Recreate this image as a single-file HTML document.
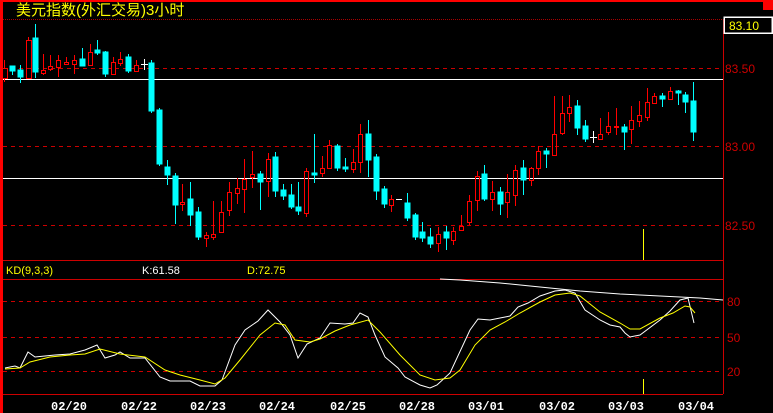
<!DOCTYPE html>
<html><head><meta charset="utf-8"><style>
html,body{margin:0;padding:0;background:#000;width:773px;height:413px;overflow:hidden}
svg{display:block}
text{font-family:"Liberation Sans","Noto Sans CJK SC",sans-serif}
</style></head><body>
<svg width="773" height="413" viewBox="0 0 773 413" xmlns="http://www.w3.org/2000/svg" shape-rendering="crispEdges">
<rect width="773" height="413" fill="#000"/>
<rect x="0" y="0" width="3" height="413" fill="#f00"/>
<rect x="0" y="0" width="773" height="2" fill="#f00"/>
<rect x="763" y="0" width="10" height="10" fill="#f00"/>
<text x="16" y="15" fill="#ff0" font-size="15">美元指数(外汇交易)3小时</text>
<line x1="3" y1="19.5" x2="723" y2="19.5" stroke="#a00" stroke-dasharray="1,1"/>
<line x1="723.5" y1="19" x2="723.5" y2="394" stroke="#c00"/>
<rect x="724" y="17" width="48" height="16" fill="#000" stroke="#fff" stroke-width="1.5"/>
<text x="729" y="30" fill="#ff0" font-size="12">83.10</text>
<g stroke="#c00" stroke-dasharray="4,4">
<line x1="3" y1="68.5" x2="723" y2="68.5"/><line x1="3" y1="146.5" x2="723" y2="146.5"/><line x1="3" y1="225.5" x2="723" y2="225.5"/>
<line x1="3" y1="301.5" x2="723" y2="301.5"/><line x1="3" y1="337.5" x2="723" y2="337.5"/><line x1="3" y1="371.5" x2="723" y2="371.5"/>
</g>
<line x1="3" y1="79.5" x2="723" y2="79.5" stroke="#fff"/>
<line x1="3" y1="178.5" x2="723" y2="178.5" stroke="#fff"/>
<g fill="#c00" font-size="12">
<text x="725" y="73">83.50</text><text x="725" y="151">83.00</text><text x="725" y="230">82.50</text>
<text x="727" y="306">80</text><text x="727" y="342">50</text><text x="727" y="376">20</text>
</g>
<line x1="3" y1="260.5" x2="723" y2="260.5" stroke="#c00"/>
<line x1="3" y1="279.5" x2="723" y2="279.5" stroke="#c00"/>
<line x1="3" y1="394.5" x2="723" y2="394.5" stroke="#c00"/>
<line x1="643.5" y1="229" x2="643.5" y2="260" stroke="#ff0"/>
<line x1="643.5" y1="379" x2="643.5" y2="394" stroke="#ff0"/>
<text x="6" y="274" fill="#ff0" font-size="11">KD(9,3,3)</text>
<text x="142" y="274" fill="#fff" font-size="11">K:61.58</text>
<text x="247" y="274" fill="#ff0" font-size="11">D:72.75</text>
<!-- candles: cyan filled -->
<g stroke="#0ff" fill="#0ff">
<path d="M12.5 66V75M20.5 65V83M35.5 24V78M82.5 48V66M97.5 40V55M105.5 51V77M128.5 54V73M151.5 60V113M159.5 108V166M167.5 160V185M175.5 173V224M190.5 182V226M198.5 207V240M260.5 171V210M275.5 152V197M283.5 184V200M291.5 184V209M298.5 182V215M314.5 134V183M337.5 144V171M345.5 158V172M368.5 120V177M376.5 154V200M384.5 186V208M407.5 193V221M415.5 213V240M422.5 222V242M430.5 228V248M446.5 226V250M484.5 165V201M500.5 187V215M523.5 160V195M546.5 148V168M577.5 100V135M585.5 120V142M624.5 124V150M662.5 93V107M678.5 90V105M685.5 92V113M693.5 82V141"/>
<rect x="10" y="66" width="5" height="5"/><rect x="18" y="70" width="5" height="7"/><rect x="33" y="38" width="5" height="34"/>
<rect x="80" y="59" width="5" height="7"/><rect x="95" y="50" width="5" height="3"/><rect x="103" y="52" width="5" height="22"/>
<rect x="126" y="57" width="5" height="14"/><rect x="149" y="63" width="5" height="48"/><rect x="157" y="110" width="5" height="54"/>
<rect x="165" y="167" width="5" height="8"/><rect x="173" y="176" width="5" height="29"/><rect x="188" y="199" width="5" height="16"/>
<rect x="196" y="212" width="5" height="25"/><rect x="258" y="174" width="5" height="8"/><rect x="273" y="157" width="5" height="34"/>
<rect x="281" y="190" width="5" height="6"/><rect x="289" y="195" width="5" height="12"/><rect x="296" y="207" width="5" height="4"/>
<rect x="312" y="173" width="5" height="2"/><rect x="335" y="146" width="5" height="22"/><rect x="343" y="167" width="5" height="2"/>
<rect x="366" y="134" width="5" height="26"/><rect x="374" y="157" width="5" height="34"/><rect x="382" y="189" width="5" height="15"/>
<rect x="405" y="203" width="5" height="15"/><rect x="413" y="215" width="5" height="22"/><rect x="420" y="232" width="5" height="6"/>
<rect x="428" y="237" width="5" height="7"/><rect x="444" y="232" width="5" height="6"/><rect x="482" y="174" width="5" height="25"/>
<rect x="498" y="192" width="5" height="12"/><rect x="521" y="168" width="5" height="12"/><rect x="544" y="151" width="5" height="3"/>
<rect x="575" y="106" width="5" height="22"/><rect x="583" y="126" width="5" height="13"/><rect x="622" y="127" width="5" height="5"/>
<rect x="660" y="96" width="5" height="3"/><rect x="676" y="91" width="5" height="2"/><rect x="683" y="95" width="5" height="7"/>
<rect x="691" y="101" width="5" height="31"/>
</g>
<!-- red hollow -->
<g stroke="#f00" fill="none">
<path d="M4.5 60V68M4.5 78V82M28.5 37V40M43.5 54V70M43.5 73V75M50.5 55V66M50.5 69V71M58.5 55V60M58.5 67V77M66.5 57V62M74.5 55V60M74.5 64V74M90.5 44V52M113.5 57V62M120.5 52V59M120.5 63V66M136.5 60V65M182.5 184V202M182.5 204V211M206.5 232V235M206.5 238V247M213.5 201V234M213.5 237V240M221.5 201V212M229.5 182V192M229.5 210V216M237.5 178V188M237.5 193V204M244.5 159V179M244.5 189V213M252.5 151V174M252.5 177V188M268.5 153V159M268.5 181V197M306.5 168V171M306.5 213V217M322.5 156V168M322.5 173V177M329.5 140V145M353.5 149V162M353.5 169V173M360.5 124V134M360.5 162V173M391.5 195V199M391.5 205V212M438.5 227V234M438.5 243V252M453.5 227V231M453.5 240V245M461.5 215V226M469.5 195V201M469.5 222V225M477.5 171V176M477.5 200V211M492.5 181V192M492.5 199V211M507.5 174V192M507.5 202V218M515.5 165V170M515.5 195V206M531.5 167V168M531.5 180V186M538.5 146V151M538.5 168V175M554.5 96V134M562.5 96V113M562.5 133V135M569.5 95V107M569.5 113V122M600.5 118V134M608.5 112V126M608.5 132V135M616.5 108V126M616.5 127V135M631.5 106V120M631.5 129V144M639.5 101V115M639.5 121V127M647.5 88V102M647.5 117V121M654.5 93V96M670.5 87V91"/>
<rect x="2.5" y="68.5" width="5" height="10"/><rect x="26.5" y="40.5" width="5" height="38"/><rect x="41.5" y="70.5" width="4" height="3"/>
<rect x="48.5" y="66.5" width="4" height="3"/><rect x="56.5" y="60.5" width="4" height="7"/><rect x="64.5" y="62.5" width="4" height="2"/>
<rect x="72.5" y="60.5" width="4" height="4"/><rect x="88.5" y="52.5" width="4" height="13"/><rect x="111.5" y="62.5" width="4" height="12"/>
<rect x="118.5" y="59.5" width="4" height="4"/><rect x="134.5" y="65.5" width="4" height="6"/><rect x="180.5" y="202.5" width="4" height="2"/>
<rect x="204.5" y="235.5" width="4" height="3"/><rect x="211.5" y="234.5" width="4" height="3"/><rect x="219.5" y="212.5" width="4" height="20"/>
<rect x="227.5" y="192.5" width="4" height="18"/><rect x="235.5" y="188.5" width="4" height="5"/><rect x="242.5" y="179.5" width="4" height="10"/>
<rect x="250.5" y="174.5" width="4" height="3"/><rect x="266.5" y="159.5" width="4" height="22"/><rect x="304.5" y="171.5" width="4" height="42"/>
<rect x="320.5" y="168.5" width="4" height="5"/><rect x="327.5" y="145.5" width="4" height="23"/><rect x="351.5" y="162.5" width="4" height="7"/>
<rect x="358.5" y="134.5" width="4" height="28"/><rect x="389.5" y="199.5" width="4" height="6"/><rect x="436.5" y="234.5" width="4" height="9"/>
<rect x="451.5" y="231.5" width="4" height="9"/><rect x="459.5" y="226.5" width="4" height="4"/><rect x="467.5" y="201.5" width="4" height="21"/>
<rect x="475.5" y="176.5" width="4" height="24"/><rect x="490.5" y="192.5" width="4" height="7"/><rect x="505.5" y="192.5" width="4" height="10"/>
<rect x="513.5" y="170.5" width="4" height="25"/><rect x="529.5" y="168.5" width="4" height="12"/><rect x="536.5" y="151.5" width="4" height="17"/>
<rect x="552.5" y="134.5" width="4" height="21"/><rect x="560.5" y="113.5" width="4" height="20"/><rect x="567.5" y="107.5" width="4" height="6"/>
<rect x="598.5" y="134.5" width="4" height="5"/><rect x="606.5" y="126.5" width="4" height="6"/><rect x="614.5" y="126.5" width="4" height="1"/>
<rect x="629.5" y="120.5" width="4" height="9"/><rect x="637.5" y="115.5" width="4" height="6"/><rect x="645.5" y="102.5" width="4" height="15"/>
<rect x="652.5" y="96.5" width="4" height="7"/><rect x="668.5" y="91.5" width="4" height="8"/>
</g>
<g stroke="#fff"><path d="M141 64.5H148M144.5 59V70M396 199.5H402M590 137.5H597M593.5 131V143"/></g>
<!-- KD lines -->
<g fill="none" shape-rendering="auto" stroke-width="1">
<polyline stroke="#fff" points="5,368 15,366 20,368 28,352 35,357 45,356 55,355 70,354 85,350 97,345 105,358 115,355 120,352 130,358 145,358 160,377 170,381 190,381 200,386 215,386 222,380 235,345 245,330 258,321 268,310 280,322 290,335 298,358 307,344 320,338 330,323 345,324 353,323 360,313 368,317 375,335 385,357 398,368 405,377 420,385 430,388 437,385 450,373 470,330 478,319 490,320 500,318 510,316 518,307 528,303 540,296 555,291 565,290 575,293 585,310 600,320 610,325 620,327 625,333 630,337 640,335 660,320 670,311 680,300 688,298 694,323"/>
<polyline stroke="#ff0" points="5,369 20,368 30,362 50,357 70,355 85,354 100,349 120,354 145,357 165,370 180,375 200,380 215,384 225,378 240,360 260,335 275,323 285,325 295,340 310,342 320,339 335,331 350,325 368,320 380,332 400,355 420,375 435,380 450,378 460,370 475,345 490,330 505,322 520,313 540,302 555,295 570,293 580,296 600,312 620,323 630,329 640,329 660,318 673,313 685,306 690,307 695,313"/>
<polyline stroke="#fff" points="440,279 460,280 500,283 540,287 580,291 620,294 660,296 700,298 723,300"/>
</g>
<g fill="#fff" font-size="12" font-weight="bold" font-family="Liberation Mono,monospace">
<text x="51" y="410" style="font-family:'Liberation Mono',monospace">02/20</text>
<text x="121" y="410" style="font-family:'Liberation Mono',monospace">02/22</text>
<text x="190" y="410" style="font-family:'Liberation Mono',monospace">02/23</text>
<text x="259" y="410" style="font-family:'Liberation Mono',monospace">02/24</text>
<text x="330" y="410" style="font-family:'Liberation Mono',monospace">02/25</text>
<text x="399" y="410" style="font-family:'Liberation Mono',monospace">02/28</text>
<text x="468" y="410" style="font-family:'Liberation Mono',monospace">03/01</text>
<text x="539" y="410" style="font-family:'Liberation Mono',monospace">03/02</text>
<text x="608" y="410" style="font-family:'Liberation Mono',monospace">03/03</text>
<text x="678" y="410" style="font-family:'Liberation Mono',monospace">03/04</text>
</g>
</svg>
</body></html>
